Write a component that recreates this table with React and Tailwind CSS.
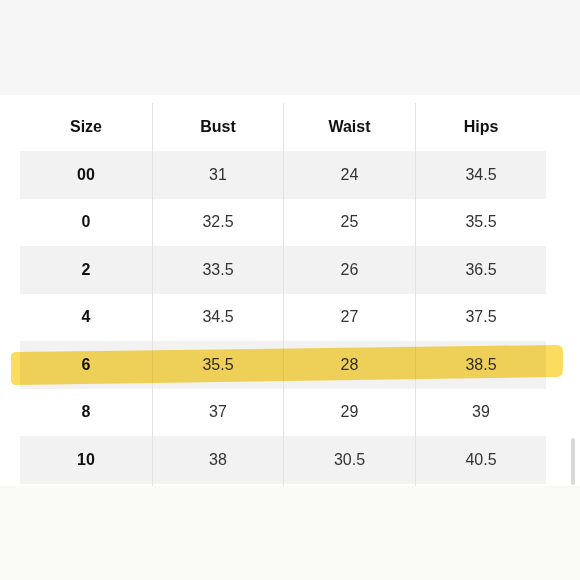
const ROWS = [
  ['00', '31', '24', '34.5'],
  ['0', '32.5', '25', '35.5'],
  ['2', '33.5', '26', '36.5'],
  ['4', '34.5', '27', '37.5'],
  ['6', '35.5', '28', '38.5'],
  ['8', '37', '29', '39'],
  ['10', '38', '30.5', '40.5'],
];

const HEADERS = ['Size', 'Bust', 'Waist', 'Hips'];

function Cell({ i, bold, children, className = '' }) {
  return (
    <div
      className={`flex items-center justify-center text-[16px] ${i > 0 ? 'border-l border-[#e2e2e2]' : ''} ${
        bold ? 'font-bold text-[#111]' : 'text-[#333]'
      } ${className}`}
    >
      {children}
    </div>
  );
}

export default function App() {
  return (
    <div className="relative w-[580px] h-[580px] overflow-hidden bg-white flex flex-col font-['Liberation_Sans',Arial,sans-serif]">
      {/* top band */}
      <div className="h-[95px] bg-[#f6f6f6]" />

      {/* table */}
      <div className="h-[391px] bg-white pt-[8px] pl-[20px]">
        <div className="grid grid-cols-[132px_131px_132px_131px]">
          {HEADERS.map((h, i) => (
            <Cell key={h} i={i} bold className="h-[48px] pb-[1px]">
              {h}
            </Cell>
          ))}
          {ROWS.map((row, r) =>
            row.map((v, i) => (
              <Cell
                key={`${r}-${i}`}
                i={i}
                bold={i === 0}
                className={`h-[47.5px] ${r % 2 === 0 ? 'bg-[#f2f2f2]' : 'bg-white'}`}
              >
                {v}
              </Cell>
            ))
          )}
          {HEADERS.map((h, i) => (
            <Cell key={`end-${h}`} i={i} className="h-[3px]" />
          ))}
        </div>
      </div>

      {/* bottom band */}
      <div className="flex-1 bg-[#fafaf4]" />

      {/* highlighter stroke */}
      <svg
        className="absolute left-0 top-[340px] mix-blend-multiply pointer-events-none"
        width="580"
        height="52"
        viewBox="0 0 580 52"
      >
        <path
          d="M16 12 L557 5 Q563 5 563 12 L563 30 Q563 37 556 37 L16 45 Q11 45 11 40 L11 17 Q11 12 16 12 Z"
          fill="#fbdc5e"
        />
      </svg>

      {/* scrollbar */}
      <div className="absolute left-[571px] top-[438px] w-[4px] h-[47px] rounded-sm bg-[#d9d9d9]" />
    </div>
  );
}
